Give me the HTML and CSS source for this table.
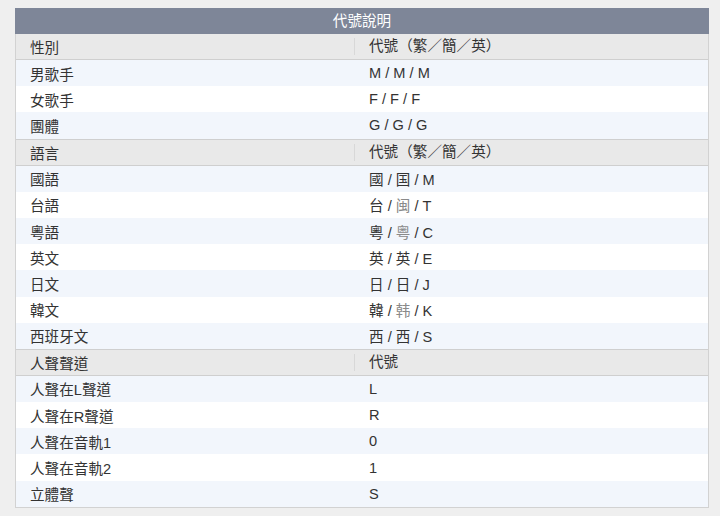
FILE: index.html
```html
<!DOCTYPE html>
<html lang="zh-Hant">
<head>
<meta charset="utf-8">
<title>代號說明</title>
<link rel="stylesheet" href="styles.css">
</head>
<body>
<div class="panel">
  <div class="title">代號說明</div>

  <div class="head first"><div class="c1">性別</div><div class="c2">代號（繁／簡／英）</div></div>
  <div class="row odd"><div class="c1">男歌手</div><div class="c2">M / M / M</div></div>
  <div class="row"><div class="c1">女歌手</div><div class="c2">F / F / F</div></div>
  <div class="row odd"><div class="c1">團體</div><div class="c2">G / G / G</div></div>

  <div class="head"><div class="c1">語言</div><div class="c2">代號（繁／簡／英）</div></div>
  <div class="row odd"><div class="c1">國語</div><div class="c2">國 / 国 / M</div></div>
  <div class="row"><div class="c1">台語</div><div class="c2">台 / <span class="alt">闽</span> / T</div></div>
  <div class="row odd"><div class="c1">粵語</div><div class="c2">粵 / <span class="alt">粤</span> / C</div></div>
  <div class="row"><div class="c1">英文</div><div class="c2">英 / 英 / E</div></div>
  <div class="row odd"><div class="c1">日文</div><div class="c2">日 / 日 / J</div></div>
  <div class="row"><div class="c1">韓文</div><div class="c2">韓 / <span class="alt">韩</span> / K</div></div>
  <div class="row odd"><div class="c1">西班牙文</div><div class="c2">西 / 西 / S</div></div>

  <div class="head"><div class="c1">人聲聲道</div><div class="c2">代號</div></div>
  <div class="row odd"><div class="c1">人聲在L聲道</div><div class="c2">L</div></div>
  <div class="row"><div class="c1">人聲在R聲道</div><div class="c2">R</div></div>
  <div class="row odd"><div class="c1">人聲在音軌1</div><div class="c2">0</div></div>
  <div class="row"><div class="c1">人聲在音軌2</div><div class="c2">1</div></div>
  <div class="row odd"><div class="c1">立體聲</div><div class="c2">S</div></div>
</div>
</body>
</html>
```

FILE: styles.css
```css
html, body {
  margin: 0;
  padding: 0;
  background: #efefef;
}

body {
  padding: 8px 11px 0 15px;
  font-family: "Liberation Sans", "Noto Sans CJK TC", sans-serif;
  font-size: 14.6px;
  color: #333;
}

.panel {
  border: 1px solid #d2d2d2;
  border-top: 0;
  background: #fff;
}

.title {
  height: 26px;
  line-height: 26px;
  background: #7e8698;
  color: #fff;
  text-align: center;
  margin: 0 -1px;
}

.head {
  display: flex;
  align-items: center;
  height: 25px;
  background: #e9e9e9;
  border-top: 1px solid #cfcfcf;
  border-bottom: 1px solid #cfcfcf;
}

.head.first {
  border-top: 0;
}

.row {
  display: flex;
  align-items: center;
  height: 26.2px;
  background: #fff;
}

.row.odd {
  background: #f2f6fc;
}

.c1 {
  width: 324px;
  padding-left: 14px;
  flex: none;
}

.c2 {
  padding-left: 14px;
  flex: 1;
}

.head .c2 {
  border-left: 1px solid #d8d8d8;
  height: 17px;
  line-height: 17px;
}

.row .c2 {
  margin-left: 1px;
}

.alt {
  color: #8a8a8a;
}
```
